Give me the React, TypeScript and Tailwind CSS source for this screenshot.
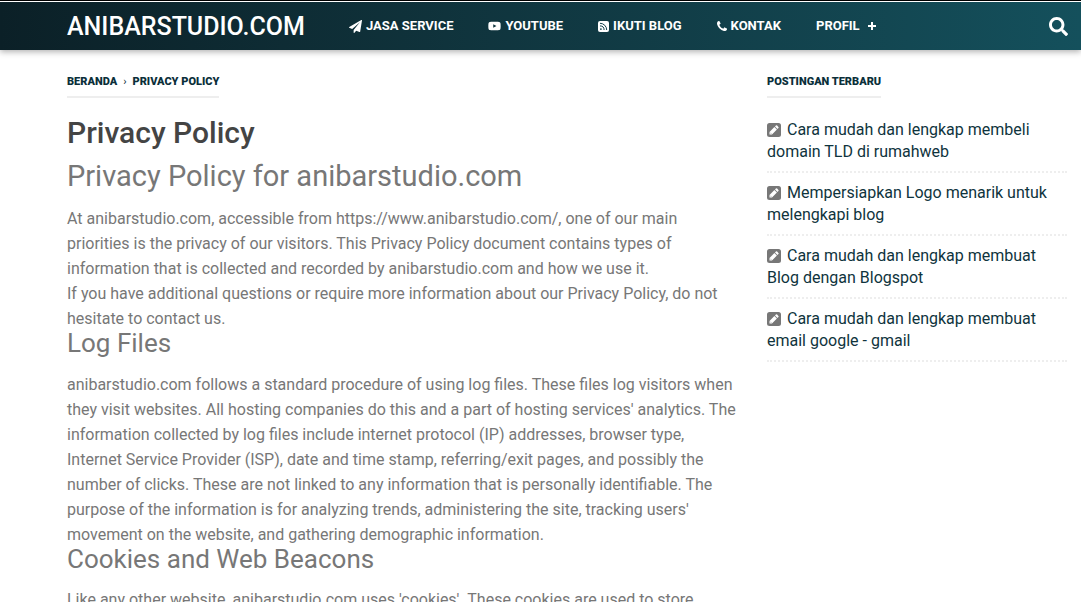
import React from 'react';
import { FaYoutube, FaSearch } from 'react-icons/fa';

function PlaneIcon() {
  return (
    <svg viewBox="0 0 1792 1792" className="h-[13px] w-[13px]" fill="currentColor">
      <path d="M1764 11q33 24 27 64l-256 1536q-5 29-32 45-14 8-31 8-11 0-24-5l-453-185-242 295q-18 23-49 23-13 0-22-4-19-7-30.5-23.5t-11.5-36.5v-349l864-1059-1069 925-395-162q-37-14-40-55-2-40 32-59l1664-960q15-9 32-9 20 0 36 11z" />
    </svg>
  );
}

function YoutubeIcon() {
  return <FaYoutube className="h-3.5 w-[13px]" />;
}

function RssIcon() {
  return (
    <svg viewBox="0 0 11 11" className="h-[11px] w-[11px]" fill="none">
      <rect width="11" height="11" rx="2" fill="currentColor" />
      <circle cx="2.9" cy="8.1" r="0.9" fill="#11404b" />
      <path d="M2 4.9a4.1 4.1 0 0 1 4.1 4.1M2 2.3a6.7 6.7 0 0 1 6.7 6.7" stroke="#11404b" strokeWidth="1" />
    </svg>
  );
}

function PhoneIcon() {
  return (
    <svg viewBox="192 128 1408 1408" className="h-[10px] w-[10px]" fill="currentColor">
      <path d="M1600 1240q0 27-10 70.5t-21 68.5q-21 50-122 106-94 51-186 51-27 0-53-3.5t-57.5-12.5-47-14.5-55.5-20.5-49-18q-98-35-175-83-127-79-264-216t-216-264q-48-77-83-175-3-9-18-49t-20.5-55.5-14.5-47-12.5-57.5-3.5-53q0-92 51-186 56-101 106-122 25-11 68.5-21t70.5-10q14 0 21 3 18 6 53 76 11 19 30 54t35 63.5 31 53.5q3 4 17.5 25t21.5 35.5 7 28.5q0 20-28.5 50t-62 55-62 53-28.5 46q0 9 5 22.5t8.5 20.5 14 24 11.5 19q76 137 174 235t235 174q2 1 19 11.5t24 14 20.5 8.5 22.5 5q18 0 46-28.5t53-62 55-62 50-28.5q14 0 28.5 7t35.5 21.5 25 17.5q25 15 53.5 31t63.5 35 54 30q70 35 76 53 3 7 3 21z" />
    </svg>
  );
}

function PencilIcon() {
  return (
    <svg viewBox="0 0 14 14" className="mr-1.5 mb-0.5 inline h-3.5 w-3.5 align-middle">
      <rect width="14" height="14" rx="2.5" fill="#777777" />
      <path d="M2.5 11.5V9l4.9-4.9 2.5 2.5L5 11.5zM8 3.5l.9-.9q.6-.6 1.2 0l1.3 1.3q.6.6 0 1.2l-.9.9z" fill="#ffffff" />
      <path d="M3.3 9.7l1 1" stroke="#777777" strokeWidth="0.6" />
    </svg>
  );
}

const menu = [
  { label: 'JASA SERVICE', icon: PlaneIcon },
  { label: 'YOUTUBE', icon: YoutubeIcon },
  { label: 'IKUTI BLOG', icon: RssIcon },
  { label: 'KONTAK', icon: PhoneIcon },
];

const recentPosts = [
  'Cara mudah dan lengkap membeli domain TLD di rumahweb',
  'Mempersiapkan Logo menarik untuk melengkapi blog',
  'Cara mudah dan lengkap membuat Blog dengan Blogspot',
  'Cara mudah dan lengkap membuat email google - gmail',
];

function Header() {
  return (
    <header className="border-t border-black bg-white pt-px shadow-[0_2px_6px_rgba(0,0,0,0.3)]">
      <div className="flex h-12 items-center bg-linear-to-r from-[#0b2027] to-[#14505c] pr-[13px] pl-[67px] text-white">
        <a href="#" className="w-[282px] shrink-0 pt-0.5 text-[25px] leading-8 font-medium">ANIBARSTUDIO.COM</a>
        <nav className="flex items-center gap-[35px] text-[13px] leading-5 font-bold whitespace-nowrap">
          {menu.map(({ label, icon: Icon }) => (
            <a key={label} href="#" className="flex items-center gap-1">
              <Icon />
              {label}
            </a>
          ))}
          <button type="button" className="flex items-center gap-2">
            PROFIL
            <svg viewBox="0 0 8 8" className="h-2 w-2" stroke="currentColor" strokeWidth="2">
              <path d="M4 0v8M0 4h8" />
            </svg>
          </button>
        </nav>
        <button type="button" aria-label="Cari" className="ml-auto">
          <FaSearch className="h-[19px] w-[19px]" />
        </button>
      </div>
    </header>
  );
}

function Article() {
  return (
    <main className="min-w-0 flex-1 text-[#777777]">
      <div className="flex">
        <nav
          aria-label="Breadcrumb"
          className="flex gap-1.5 border-b-2 border-[#eeeeee] pb-1 text-[11px] leading-5 font-black text-[#0b2f3a]"
        >
          <a href="#">BERANDA</a>
          <span className="font-normal">›</span>
          <a href="#">PRIVACY POLICY</a>
        </nav>
      </div>
      <h1 className="mt-[15px] text-[30px] leading-10 font-medium text-[#444444]">Privacy Policy</h1>
      <h2 className="mt-[3px] mb-2.5 text-[29px] leading-10">Privacy Policy for anibarstudio.com</h2>
      <p>
        At anibarstudio.com, accessible from https://www.anibarstudio.com/, one of our main priorities is the privacy
        of our visitors. This Privacy Policy document contains types of information that is collected and recorded by
        anibarstudio.com and how we use it.
      </p>
      <p>
        If you have additional questions or require more information about our Privacy Policy, do not hesitate to
        contact us.
      </p>
      <h3 className="mb-4 text-[26px] leading-[25px]">Log Files</h3>
      <p>
        anibarstudio.com follows a standard procedure of using log files. These files log visitors when they visit
        websites. All hosting companies do this and a part of hosting services' analytics. The information collected
        by log files include internet protocol (IP) addresses, browser type, Internet Service Provider (ISP), date and
        time stamp, referring/exit pages, and possibly the number of clicks. These are not linked to any information
        that is personally identifiable. The purpose of the information is for analyzing trends, administering the
        site, tracking users' movement on the website, and gathering demographic information.
      </p>
      <h3 className="mb-[15px] text-[26px] leading-[25px]">Cookies and Web Beacons</h3>
      <p>Like any other website, anibarstudio.com uses 'cookies'. These cookies are used to store</p>
    </main>
  );
}

function Sidebar() {
  return (
    <aside className="w-[300px] shrink-0">
      <div className="flex">
        <h2 className="border-b-2 border-[#eeeeee] pb-1 text-[11px] leading-5 font-black text-[#0b2f3a]">
          POSTINGAN TERBARU
        </h2>
      </div>
      <ul className="mt-3">
        {recentPosts.map((title) => (
          <li key={title} className="border-b-2 border-dotted border-[#eeeeee] pt-[9px] pb-2 leading-[22px]">
            <PencilIcon />
            <a href="#" className="text-[#0f343d]">{title}</a>
          </li>
        ))}
      </ul>
    </aside>
  );
}

export default function App() {
  return (
    <div className="h-screen overflow-hidden bg-white font-[Roboto,sans-serif] text-base leading-[25px]">
      <Header />
      <div className="flex gap-[30px] pt-[22px] pr-3.5 pl-[67px]">
        <Article />
        <Sidebar />
      </div>
    </div>
  );
}
